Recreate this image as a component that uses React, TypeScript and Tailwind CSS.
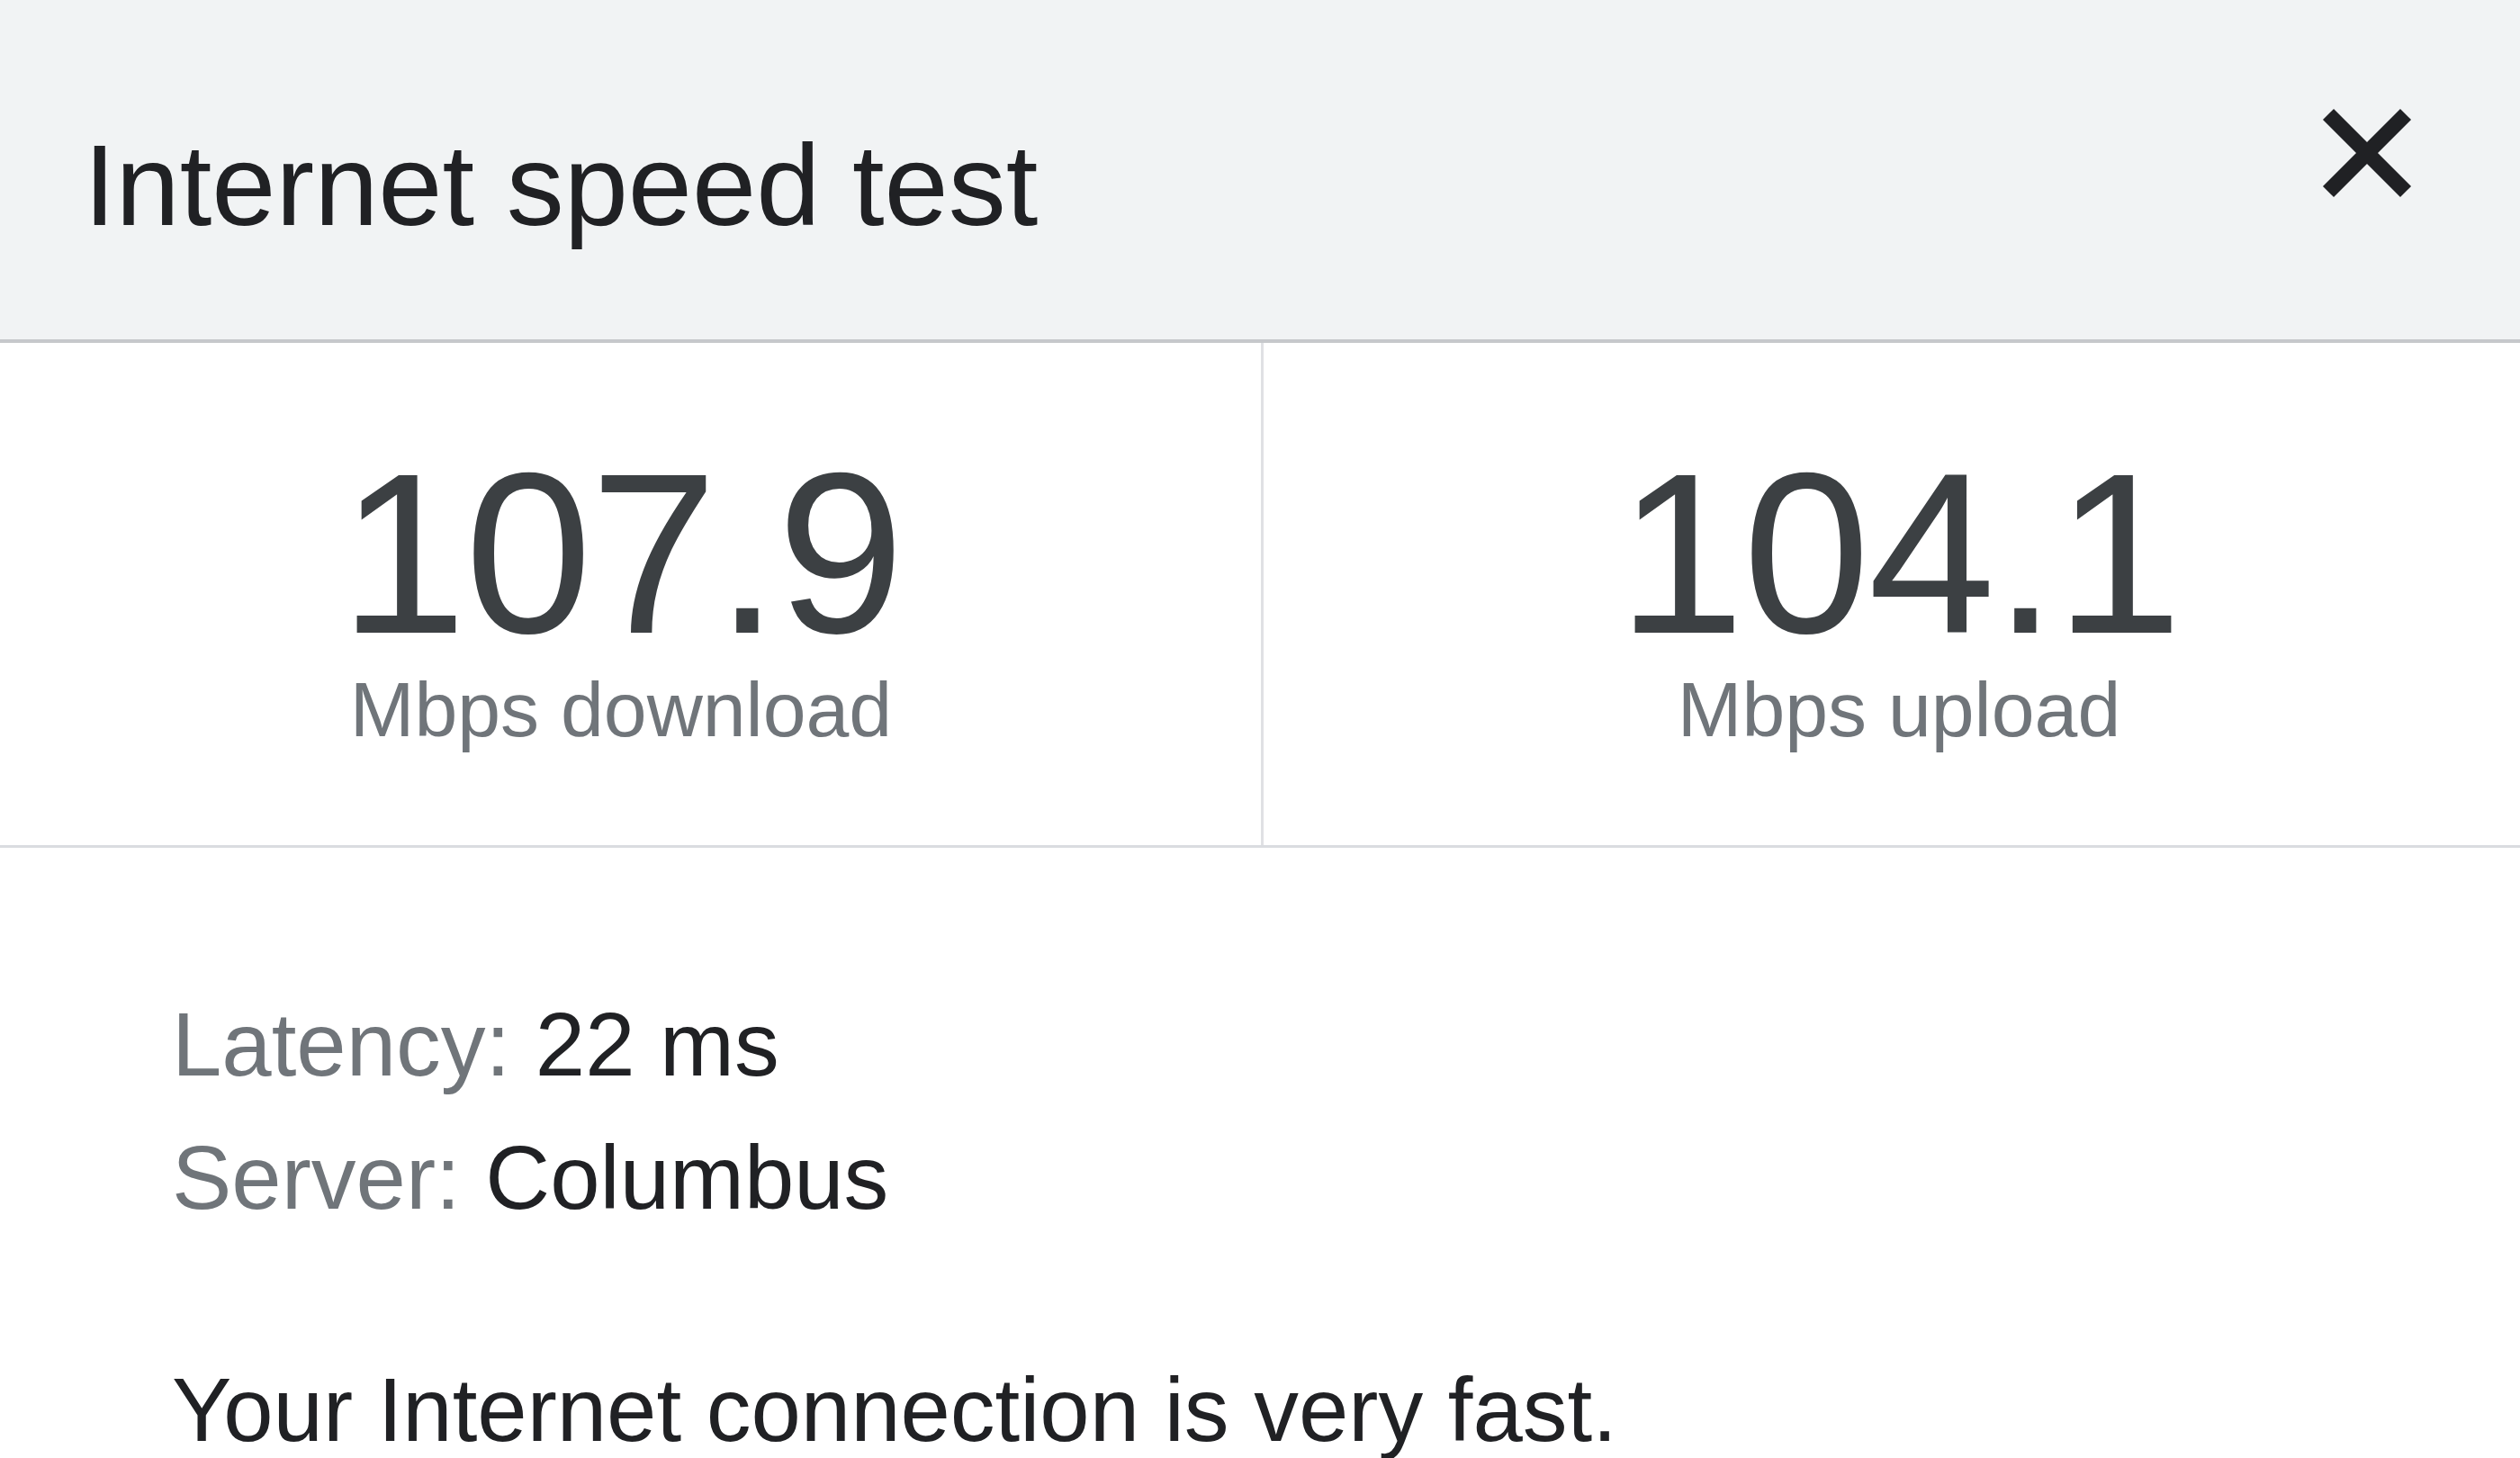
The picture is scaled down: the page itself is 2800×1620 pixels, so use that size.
import React from "react";

const Stat = ({ value, label }: { value: string; label: string }) => {
  return (
    <div className="flex flex-col items-center">
      <div className="text-[254px] leading-[200px] tracking-[-2px] text-[#3c4043]">{value}</div>
      <div className="mt-[30px] text-[86px] leading-[86px] text-[#70757a]">{label}</div>
    </div>
  );
};

const App = () => {
  return (
    <div className="w-[2800px] h-[1620px] overflow-hidden bg-white font-['Liberation_Sans',Arial,sans-serif]">
      <header className="h-[381px] bg-[#f1f3f4] border-b-4 border-[#c6c8cb] flex items-start justify-between">
        <h1 className="pl-[93px] pt-[142px] text-[128px] leading-none text-[#202124] font-normal">
          Internet speed test
        </h1>
        <button className="mt-[120px] mr-[120px]" aria-label="close">
          <svg width="100" height="100" viewBox="0 0 100 100">
            <path d="M7 7 L93 93 M93 7 L7 93" stroke="#202124" strokeWidth="17" fill="none" />
          </svg>
        </button>
      </header>

      <div className="flex h-[561px] border-b-[3px] border-[#dadce0]">
        <div className="w-[1404px] border-r-[3px] border-[#e0e1e4] pr-[21px] pt-[134px]">
          <Stat value="107.9" label="Mbps download" />
        </div>
        <div className="flex-1 pl-[16px] pt-[134px]">
          <Stat value="104.1" label="Mbps upload" />
        </div>
      </div>

      <div className="pl-[191px] pt-[145px] text-[99.5px] leading-[148px]">
        <p>
          <span className="text-[#70757a]">Latency: </span>
          <span className="text-[#202124]">22 ms</span>
        </p>
        <p>
          <span className="text-[#70757a]">Server: </span>
          <span className="text-[#202124]">Columbus</span>
        </p>
        <p className="mt-[110px] text-[#202124]">Your Internet connection is very fast.</p>
      </div>
    </div>
  );
};

export default App;
